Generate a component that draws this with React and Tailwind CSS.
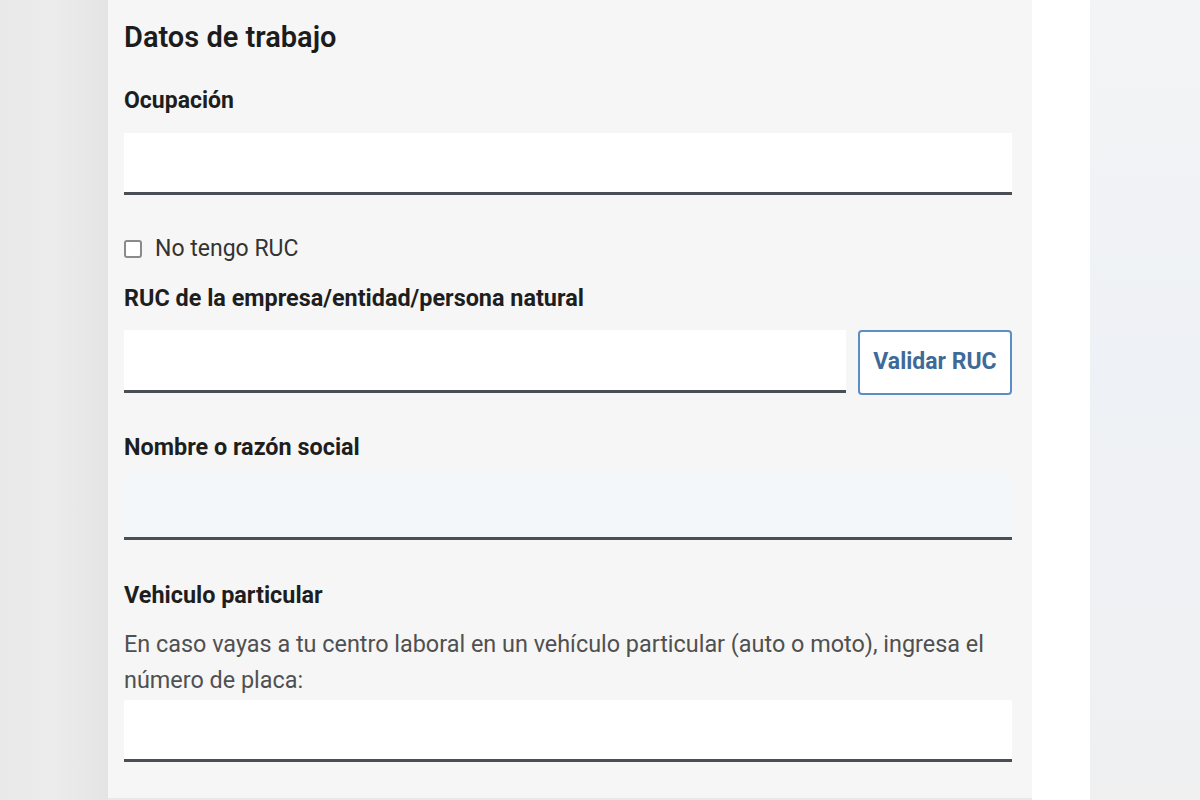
export default function App() {
  return (
    <div
      className="flex h-[800px] w-[1200px] overflow-hidden bg-white"
      style={{ fontFamily: 'Roboto, "Liberation Sans", sans-serif' }}
    >
      {/* blurred background left */}
      <div className="w-[108px] bg-gradient-to-r from-[#e9e9e9] via-[#ececec] to-[#e4e4e4]" />

      {/* form panel */}
      <div className="flex w-[924px] flex-col border-b-2 border-[#e8e8e8] bg-[#f6f6f6] pl-[16px] pr-[20px] pt-[18px]">
        <h2 className="text-[29px] font-semibold leading-[38px] text-[#1c1c1c]">Datos de trabajo</h2>

        <label className="mt-[31px] text-[23px] font-bold leading-[28px] text-[#1e1e1e]">Ocupación</label>
        <div className="mt-[18px] h-[62px] border-b-[3px] border-[#4a4f55] bg-white" />

        <div className="mt-[40px] flex h-[28px] items-center gap-[13px]">
          <span className="h-[18px] w-[18px] rounded-[3px] border-2 border-[#8a8a8a] bg-white" />
          <span className="text-[23px] leading-[28px] text-[#333]">No tengo RUC</span>
        </div>

        <label className="mt-[21px] text-[23.4px] font-bold leading-[28px] text-[#1e1e1e]">
          RUC de la empresa/entidad/persona natural
        </label>
        <div className="mt-[18px] flex items-start gap-[12px]">
          <div className="h-[63px] flex-1 border-b-[3px] border-[#4a4f55] bg-white" />
          <button className="h-[65px] w-[154px] rounded-[4px] border-2 border-[#5b8fc4] bg-white text-[23px] font-bold text-[#3f6a97]">
            Validar RUC
          </button>
        </div>

        <label className="mt-[38px] text-[23.4px] font-bold leading-[28px] text-[#1e1e1e]">Nombre o razón social</label>
        <div className="mt-[11px] h-[68px] border-b-[3px] border-[#4a4f55] bg-[#f4f7fa]" />

        <label className="mt-[41px] text-[23.4px] font-bold leading-[28px] text-[#1e1e1e]">Vehiculo particular</label>
        <p className="mt-[17px] text-[23.4px] leading-[36px] text-[#505050]">
          En caso vayas a tu centro laboral en un vehículo particular (auto o moto), ingresa el número de placa:
        </p>
        <div className="mt-[2px] h-[62px] border-b-[3px] border-[#4a4f55] bg-white" />
      </div>

      {/* white strip */}
      <div className="w-[58px] bg-white" />

      {/* blurred background right */}
      <div className="flex-1 bg-gradient-to-b from-[#f3f4f6] via-[#eef1f5] to-[#f0f0f1]" />
    </div>
  );
}
